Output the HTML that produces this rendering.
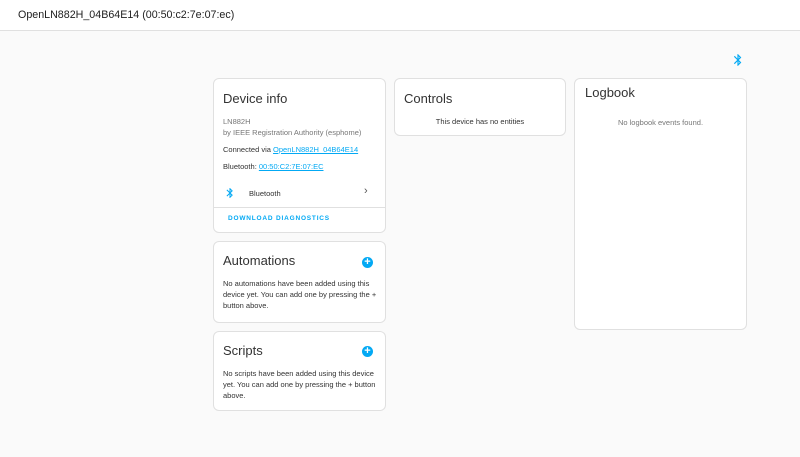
<!DOCTYPE html>
<html><head><style>
*{box-sizing:border-box;margin:0;padding:0}
body{width:800px;height:457px;background:#fafafa;font-family:"Liberation Sans",sans-serif;color:#212121;position:relative;overflow:hidden}
.hdr{position:absolute;left:0;top:0;width:800px;height:31px;background:#fff;border-bottom:1px solid #e0e0e0;font-size:10.7px;padding:9px 0 0 18px}
.card{position:absolute;background:#fff;border:1px solid #e0e0e0;border-radius:6px}
h2{font-weight:400;font-size:13px;color:#333}
.s{font-size:7.5px;line-height:11px;color:#333}
.g{color:#777}
a{color:#03a9f4;text-decoration:underline}
.plus{position:absolute;right:12px;width:11px;height:11px;border-radius:50%;background:#03a9f4;color:#fff;font-size:11px;line-height:11px;text-align:center;font-weight:700}
</style></head><body>
<div class="hdr">OpenLN882H_04B64E14 (00:50:c2:7e:07:ec)</div>
<svg style="position:absolute;left:731px;top:53px" width="14" height="14" viewBox="0 0 24 24"><path fill="#03a9f4" d="M14.88,16.29L13,18.17V14.41M13,5.83L14.88,7.71L13,9.58M17.71,7.71L12,2H11V9.58L6.41,5L5,6.41L10.59,12L5,17.58L6.41,19L11,14.41V22H12L17.71,16.29L13.41,12L17.71,7.71Z"/></svg>

<div class="card" style="left:213px;top:78px;width:173px;height:155px">
<h2 style="position:absolute;left:9px;top:12px">Device info</h2>
<div class="s g" style="position:absolute;left:9px;top:37px">LN882H<br>by IEEE Registration Authority (esphome)</div>
<div class="s" style="position:absolute;left:9px;top:65px">Connected via <a>OpenLN882H_04B64E14</a></div>
<div class="s" style="position:absolute;left:9px;top:82px">Bluetooth: <a>00:50:C2:7E:07:EC</a></div>
<svg style="position:absolute;left:10px;top:108px" width="12" height="12" viewBox="0 0 24 24"><path fill="#03a9f4" d="M14.88,16.29L13,18.17V14.41M13,5.83L14.88,7.71L13,9.58M17.71,7.71L12,2H11V9.58L6.41,5L5,6.41L10.59,12L5,17.58L6.41,19L11,14.41V22H12L17.71,16.29L13.41,12L17.71,7.71Z"/></svg>
<div class="s" style="position:absolute;left:35px;top:109px">Bluetooth</div>
<div style="position:absolute;left:150px;top:106px;font-size:11px;color:#555">›</div>
<div style="position:absolute;left:0;top:128px;width:171px;border-top:1px solid #e0e0e0"></div>
<div style="position:absolute;left:14px;top:136px;font-size:6.5px;letter-spacing:.8px;color:#03a9f4;font-weight:700">DOWNLOAD DIAGNOSTICS</div>
</div>

<div class="card" style="left:213px;top:241px;width:173px;height:82px">
<h2 style="position:absolute;left:9px;top:11px">Automations</h2>
<div class="plus" style="top:15px">+</div>
<div class="s" style="position:absolute;left:9px;top:36px;width:155px">No automations have been added using this device yet. You can add one by pressing the + button above.</div>
</div>

<div class="card" style="left:213px;top:331px;width:173px;height:80px">
<h2 style="position:absolute;left:9px;top:11px">Scripts</h2>
<div class="plus" style="top:14px">+</div>
<div class="s" style="position:absolute;left:9px;top:36px;width:155px">No scripts have been added using this device yet. You can add one by pressing the + button above.</div>
</div>

<div class="card" style="left:394px;top:78px;width:172px;height:58px">
<h2 style="position:absolute;left:9px;top:12px">Controls</h2>
<div class="s" style="position:absolute;left:0;width:170px;text-align:center;top:37px">This device has no entities</div>
</div>

<div class="card" style="left:574px;top:78px;width:173px;height:252px">
<h2 style="position:absolute;left:10px;top:6px">Logbook</h2>
<div class="s g" style="position:absolute;left:0;width:171px;text-align:center;top:38px">No logbook events found.</div>
</div>
</body></html>
